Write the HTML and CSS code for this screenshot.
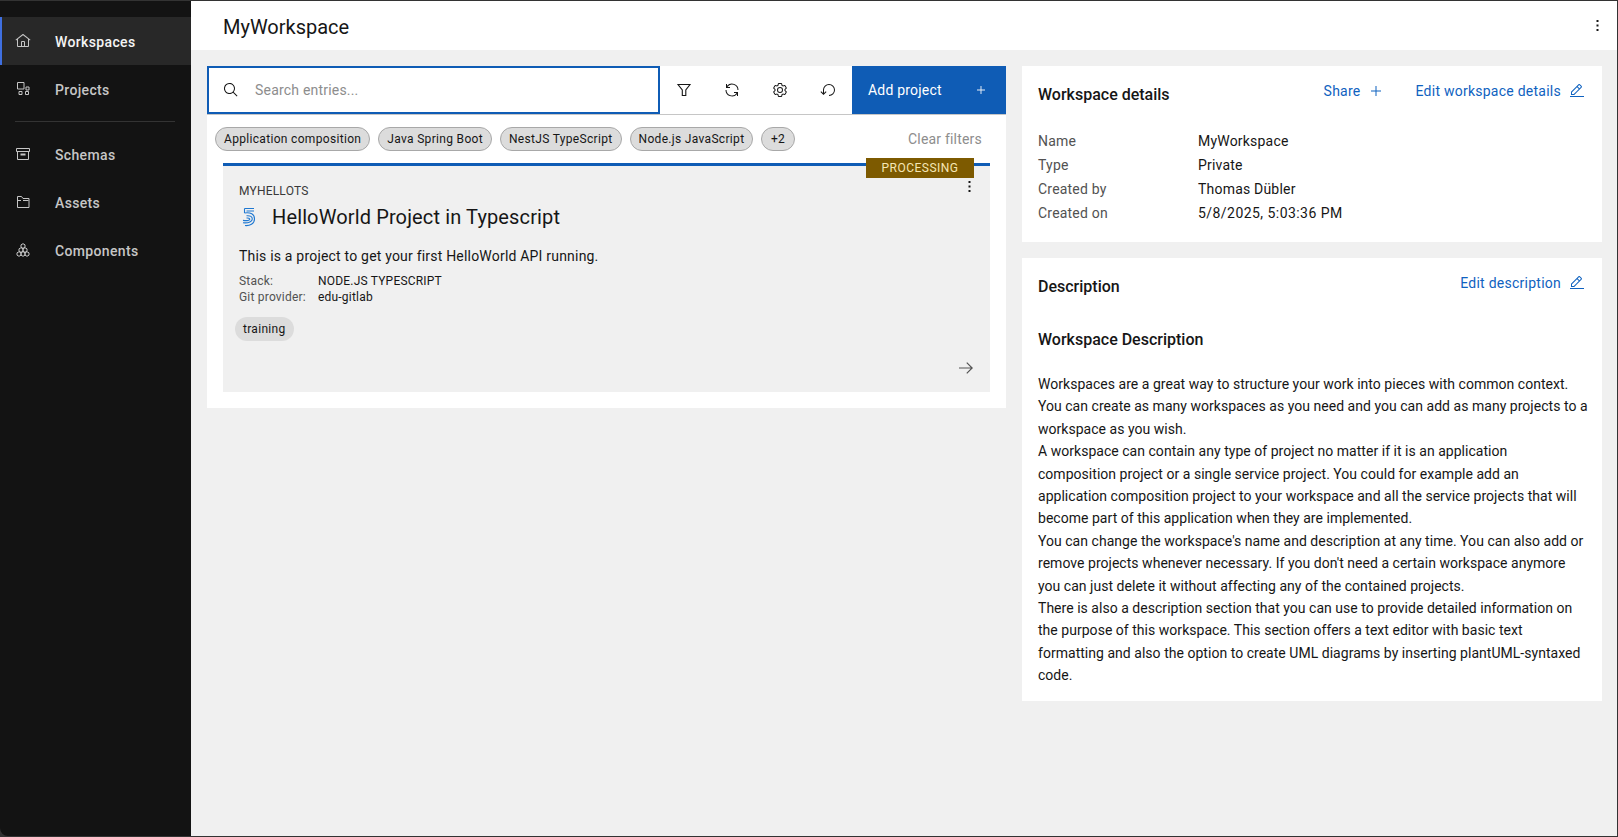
FILE: index.html
```html
<!DOCTYPE html>
<html lang="en">
<head>
<meta charset="utf-8">
<title>MyWorkspace</title>
<link rel="stylesheet" href="styles.css">
</head>
<body>
<div class="app">
  <nav class="sidebar">
    <a class="nav-item active">
      <svg class="nav-icon solid" viewBox="0 0 32 32"><path d="M16.6 2.2a1 1 0 0 0-1.2 0L1 13.4l1.2 1.6L4 13.6V26a2 2 0 0 0 2 2h20a2 2 0 0 0 2-2V13.6L29.800 15 31 13.400ZM18 26h-4v-8h4Zm2 0v-8a2 2 0 0 0-2-2h-4a2 2 0 0 0-2 2v8H6V12.100l10-7.800 10 7.800V26Z"/></svg>
      <span class="nav-label">Workspaces</span>
    </a>
    <a class="nav-item">
      <svg class="nav-icon" viewBox="0 0 16 16"><path d="M2.500 1.500h6.500v6.500H2.500zM11 6h3v3h-3zM4 10.500h3v3H4zM10.500 10.500h3v3h-3z"/></svg>
      <span class="nav-label">Projects</span>
    </a>
    <div class="nav-divider"></div>
    <a class="nav-item">
      <svg class="nav-icon" viewBox="0 0 16 16"><path d="M1.500 2.500h13v3h-13zM2.500 5.500v8h11v-8"/><path class="fill" d="M5.500 7.500h5v2h-5z"/></svg>
      <span class="nav-label">Schemas</span>
    </a>
    <a class="nav-item">
      <svg class="nav-icon" viewBox="0 0 16 16"><path d="M2.500 2.500h4l1.500 2h6v9h-11.500zM8 6.500h5.500M2.500 6.500h3.500"/></svg>
      <span class="nav-label">Assets</span>
    </a>
    <a class="nav-item">
      <svg class="nav-icon" viewBox="0 0 16 16"><path d="M8 1.700l2 1.150v2.300l-2 1.150-2-1.150v-2.300zM6 5.700l2 1.150v2.300l-2 1.150-2-1.150v-2.300zM10 5.700l2 1.150v2.300l-2 1.150-2-1.150v-2.300zM4 9.700l2 1.150v2.300l-2 1.150-2-1.150v-2.300zM8 9.700l2 1.150v2.300l-2 1.150-2-1.150v-2.300zM12 9.700l2 1.150v2.300l-2 1.150-2-1.150v-2.300z"/></svg>
      <span class="nav-label">Components</span>
    </a>
  </nav>
  <div class="main">
    <header class="topbar">
      <h1 class="page-title">MyWorkspace</h1>
      <svg class="kebab" viewBox="0 0 3 11"><path d="M.5 0h2v2h-2zM.5 4.500h2v2h-2zM.5 9h2v2h-2z"/></svg>
    </header>
    <div class="content">
      <section class="left-panel">
        <div class="toolbar">
          <div class="search">
            <svg class="tool-icon" viewBox="0 0 32 32"><path d="M29 27.600l-7.600-7.600a11 11 0 1 0-1.400 1.400L27.600 29ZM4 13a9 9 0 1 1 9 9 9 9 0 0 1-9-9Z"/></svg>
            <span class="placeholder">Search entries...</span>
          </div>
          <div class="tools">
            <button class="tool"><svg class="tool-icon outline" viewBox="0 0 16 16"><path d="M2 2.500h12L9.800 8v5.500H6.300V8z"/></svg></button>
            <button class="tool"><svg class="tool-icon" viewBox="0 0 32 32"><path d="M12 10H6.780A11 11 0 0 1 27 16h2A13 13 0 0 0 6 7.680V4H4v8h8zM20 22h5.220A11 11 0 0 1 5 16H3a13 13 0 0 0 23 8.320V28h2v-8h-8z"/></svg></button>
            <button class="tool"><svg class="tool-icon" viewBox="0 0 32 32"><path d="M27 16.760c0-.25 0-.5 0-.76s0-.51 0-.77l1.920-1.680A2 2 0 0 0 29.300 11L26.940 7a2 2 0 0 0-1.730-1 2 2 0 0 0-.64.1l-2.430.82a11.350 11.350 0 0 0-1.310-.75l-.51-2.520a2 2 0 0 0-2-1.610H13.640a2 2 0 0 0-2 1.610l-.51 2.520a11.480 11.480 0 0 0-1.320.75L7.430 6.060A2 2 0 0 0 6.790 6 2 2 0 0 0 5.060 7L2.700 11a2 2 0 0 0 .41 2.510L5 15.240c0 .25 0 .5 0 .76s0 .51 0 .77l-1.890 1.680A2 2 0 0 0 2.700 21L5.060 25a2 2 0 0 0 1.730 1 2 2 0 0 0 .64-.1l2.430-.82a11.350 11.350 0 0 0 1.310.75l.51 2.520a2 2 0 0 0 2 1.610h4.720a2 2 0 0 0 2-1.610l.51-2.520a11.480 11.480 0 0 0 1.320-.75l2.420.82a2 2 0 0 0 .64.1 2 2 0 0 0 1.730-1L29.300 21a2 2 0 0 0-.41-2.510ZM25.210 24l-3.430-1.160a8.860 8.860 0 0 1-2.710 1.570L18.360 28H13.640l-.71-3.550a9.360 9.360 0 0 1-2.700-1.570L6.790 24 4.430 20l2.720-2.400a8.900 8.900 0 0 1 0-3.130L4.430 12 6.790 8l3.430 1.160a8.860 8.860 0 0 1 2.710-1.570L13.640 4h4.720l.71 3.550a9.360 9.360 0 0 1 2.700 1.570L25.210 8 27.570 12l-2.720 2.400a8.900 8.900 0 0 1 0 3.130L27.570 20ZM16 22a6 6 0 1 1 6-6 5.940 5.940 0 0 1-6 6Zm0-10a3.910 3.910 0 0 0-4 4 3.910 3.910 0 0 0 4 4 3.910 3.910 0 0 0 4-4 3.910 3.910 0 0 0-4-4Z"/></svg></button>
            <button class="tool"><svg class="tool-icon" viewBox="0 0 32 32"><path d="M18 28A12 12 0 1 0 6 16v6.200l-3.600-3.600L1 20l6 6 6-6-1.400-1.400L8 22.200V16a10 10 0 1 1 10 10Z"/></svg></button>
          </div>
          <button class="add-btn"><span>Add project</span><svg class="plus" viewBox="0 0 10 10"><path d="M4.400 0h1.200v4.400H10v1.200H5.600V10H4.400V5.600H0V4.400h4.400z"/></svg></button>
        </div>
        <div class="filters">
          <span class="chip">Application composition</span>
          <span class="chip">Java Spring Boot</span>
          <span class="chip">NestJS TypeScript</span>
          <span class="chip">Node.js JavaScript</span>
          <span class="chip chip-more">+2</span>
          <span class="clear">Clear filters</span>
        </div>
        <article class="project">
          <span class="badge">PROCESSING</span>
          <svg class="kebab card-kebab" viewBox="0 0 3 11"><path d="M.5 0h2v2h-2zM.5 4.500h2v2h-2zM.5 9h2v2h-2z"/></svg>
          <div class="project-key">MYHELLOTS</div>
          <div class="project-head">
            <svg class="logo" viewBox="0 0 16 20"><path d="M3.500 1.500h9.500M3.500 1.500v4.500M5.500 4h7.500M3.500 6c6-.8 10 1 10 6s-5 7-9.500 6.500"/><path d="M5.500 8.800c4-.5 5.800 1 5.800 3.300S8 16.300 2 15.800M5.500 11c2-.2 3.300.3 3.300 1.300S6.500 14 2 13.400"/></svg>
            <h2 class="project-title">HelloWorld Project in Typescript</h2>
          </div>
          <p class="project-desc">This is a project to get your first HelloWorld API running.</p>
          <dl class="project-meta">
            <dt>Stack:</dt><dd>NODE.JS TYPESCRIPT</dd>
            <dt>Git provider:</dt><dd>edu-gitlab</dd>
          </dl>
          <span class="tag">training</span>
          <svg class="arrow" viewBox="4 6 24 20"><path d="M18 6l-1.430 1.390L24.150 15H4v2h20.150l-7.580 7.570L18 26l10-10z"/></svg>
        </article>
      </section>
      <div class="right-col">
        <section class="card card-details">
          <div class="card-head">
            <h3 class="card-title">Workspace details</h3>
            <div class="card-actions">
              <a class="link">Share<svg class="link-plus" viewBox="0 0 10 10"><path d="M4.500 0h1v4.500H10v1H5.500V10h-1V5.500H0v-1h4.500z"/></svg></a>
              <a class="link">Edit workspace details<svg class="pencil" viewBox="0 0 32 32"><path d="M2 26h28v2H2zM25.400 9c.8-.8.8-2 0-2.800l-3.600-3.600c-.8-.8-2-.8-2.800 0l-15 15V24h6.400l15-15zm-5-5L24 7.600l-3 3L17.400 7l3-3zM6 22v-3.600l10-10 3.600 3.600-10 10H6z"/></svg></a>
            </div>
          </div>
          <dl class="details">
            <dt>Name</dt><dd>MyWorkspace</dd>
            <dt>Type</dt><dd>Private</dd>
            <dt>Created by</dt><dd>Thomas Dübler</dd>
            <dt>Created on</dt><dd class="date">5/8/2025, 5:03:36 PM</dd>
          </dl>
        </section>
        <section class="card card-desc">
          <div class="card-head">
            <h3 class="card-title">Description</h3>
            <div class="card-actions">
              <a class="link">Edit description<svg class="pencil" viewBox="0 0 32 32"><path d="M2 26h28v2H2zM25.400 9c.8-.8.8-2 0-2.800l-3.600-3.600c-.8-.8-2-.8-2.800 0l-15 15V24h6.400l15-15zm-5-5L24 7.600l-3 3L17.400 7l3-3zM6 22v-3.600l10-10 3.600 3.600-10 10H6z"/></svg></a>
            </div>
          </div>
          <h4 class="desc-title">Workspace Description</h4>
          <div class="desc-body">
            <p>Workspaces are a great way to structure your work into pieces with common context.<br>You can create as many workspaces as you need and you can add as many projects to a<br>workspace as you wish.</p>
            <p>A workspace can contain any type of project no matter if it is an application<br>composition project or a single service project. You could for example add an<br>application composition project to your workspace and all the service projects that will<br>become part of this application when they are implemented.</p>
            <p>You can change the workspace's name and description at any time. You can also add or<br>remove projects whenever necessary. If you don't need a certain workspace anymore<br>you can just delete it without affecting any of the contained projects.</p>
            <p>There is also a description section that you can use to provide detailed information on<br>the purpose of this workspace. This section offers a text editor with basic text<br>formatting and also the option to create UML diagrams by inserting plantUML-syntaxed<br>code.</p>
          </div>
        </section>
      </div>
    </div>
  </div>
</div>
</body>
</html>
```
FILE: styles.css
```css
* { box-sizing: border-box; }
html, body { height: 100%; }
body {
  margin: 0;
  background: #3a3a3a;
  font-family: Roboto, "Noto Sans", sans-serif;
  font-size: 14px;
  color: #161616;
  overflow: hidden;
}
.app {
  display: flex;
  height: 837px;
  width: 1618px;
  padding: 1px 1px 1px 0;
  background: #333;
}
.sidebar {
  width: 191px;
  flex: none;
  background: #131313;
  padding-top: 16px;
  border-bottom-left-radius: 8px;
}
.nav-item {
  display: flex;
  align-items: center;
  height: 48px;
  padding-left: 13px;
  color: #c6c6c6;
  font-size: 14px;
  font-weight: 500;
  letter-spacing: .35px;
  border-left: 2px solid transparent;
}
.nav-item.active {
  background: #282828;
  color: #f4f4f4;
  border-left-color: #3f6fe0;
}
.nav-label { padding-top: 2px; }
.nav-icon {
  width: 16px;
  height: 16px;
  margin-right: 24px;
  fill: none;
  stroke: #c6c6c6;
  stroke-width: 1;
  flex: none;
}
.nav-icon.solid { fill: #c6c6c6; stroke: none; }
.nav-icon .fill { fill: #c6c6c6; stroke: none; }
.nav-divider {
  height: 1px;
  margin: 8px 16px 8px 15px;
  background: #333;
}
.main {
  flex: 1;
  display: flex;
  flex-direction: column;
  background: #f0f0f0;
  min-width: 0;
}
.topbar {
  height: 49px;
  background: #fff;
  flex: none;
  display: flex;
  align-items: center;
  justify-content: space-between;
  padding: 0 18px 0 32px;
}
.page-title {
  margin: 0;
  padding-top: 2px;
  font-size: 20px;
  font-weight: 400;
  color: #161616;
}
.kebab { width: 3px; height: 11px; fill: #161616; }
.content {
  display: flex;
  gap: 16px;
  padding: 16px 15px 0 16px;
  align-items: flex-start;
}
.left-panel {
  width: 799px;
  flex: none;
  background: #fff;
  padding-bottom: 16px;
}
.toolbar {
  display: flex;
  height: 49px;
  border-bottom: 1px solid #c6c6c6;
}
.search {
  width: 453px;
  border: 2px solid #0f5cb5;
  display: flex;
  align-items: center;
  padding-left: 14px;
}
.placeholder { color: #8d8d8d; margin-left: 16px; font-size: 14px; letter-spacing: .2px; }
.tools { display: flex; flex: 1; }
.tool {
  width: 48px;
  background: none;
  border: 0;
  padding: 0;
  display: flex;
  align-items: center;
  justify-content: center;
}
.tool-icon { width: 16px; height: 16px; fill: #161616; flex: none; }
.tool-icon.outline { fill: none; stroke: #161616; stroke-width: 1.1; }
.add-btn {
  width: 154px;
  flex: none;
  background: #0f5cb5;
  color: #fff;
  border: 0;
  padding: 0 21px 0 16px;
  display: flex;
  align-items: center;
  justify-content: space-between;
  font: inherit;
  letter-spacing: .2px;
}
.plus { width: 8px; height: 8px; fill: #e8eef7; }
.filters {
  display: flex;
  align-items: center;
  gap: 8px;
  padding: 0 24px 0 8px;
  height: 48px;
}
.chip {
  height: 24px;
  line-height: 22px;
  padding: 0 8px;
  border: 1px solid #a8a8a8;
  border-radius: 12px;
  background: #dcdcdc;
  font-size: 12px;
  letter-spacing: .32px;
  white-space: nowrap;
}
.chip-more { padding: 0 8.5px; }
.clear { margin-left: auto; color: #8d8d8d; font-size: 14px; letter-spacing: .2px; }
.project {
  position: relative;
  margin: 0 16px;
  height: 229px;
  background: #f0f0f0;
  border-top: 3px solid #0f5cb5;
  padding: 18px 16px 0;
}
.badge {
  position: absolute;
  top: -8px;
  right: 16px;
  width: 108px;
  height: 20px;
  line-height: 20px;
  text-align: center;
  background: #7d5a00;
  color: #f5e6b5;
  font-size: 12px;
  letter-spacing: .5px;
}
.card-kebab { position: absolute; top: 15px; right: 19px; }
.project-key { font-size: 12px; color: #393939; letter-spacing: .2px; }
.project-head { display: flex; align-items: center; gap: 15px; margin-top: 7px; }
.logo { width: 16px; height: 20px; fill: none; stroke: #1f78d1; stroke-width: 1.1; flex: none; margin-left: 2px; }
.project-title { margin: 0; font-size: 20px; font-weight: 400; letter-spacing: .13px; }
.project-desc { margin: 18px 0 0; font-size: 14px; letter-spacing: .2px; line-height: 18px; }
.project-meta {
  display: grid;
  grid-template-columns: 79px 1fr;
  margin: 8px 0 0;
  font-size: 12px;
  line-height: 16px;
  letter-spacing: .2px;
}
.project-meta dt { color: #525252; }
.project-meta dd { margin: 0; }
.tag {
  display: inline-block;
  margin: 12px 0 0 -4px;
  height: 24px;
  line-height: 24px;
  padding: 0 8px;
  border-radius: 12px;
  background: #dcdcdc;
  font-size: 12px;
  letter-spacing: .3px;
}
.arrow {
  position: absolute;
  right: 17px;
  bottom: 18px;
  width: 14px;
  height: 12px;
  fill: #525252;
}
.right-col {
  flex: 1;
  min-width: 0;
  display: flex;
  flex-direction: column;
  gap: 16px;
}
.card { background: #fff; padding: 16px; }
.card-details { padding-bottom: 17px; }
.card-desc { padding-bottom: 14px; }
.card-head {
  display: flex;
  justify-content: space-between;
  align-items: flex-start;
  padding-right: 1px;
}
.card-title { margin: 2px 0 0; font-size: 16px; font-weight: 500; line-height: 22px; }
.card-actions { display: flex; gap: 35px; margin-top: -1px; }
.link {
  display: flex;
  align-items: center;
  color: #0f62c0;
  font-size: 14px;
  letter-spacing: .25px;
  line-height: 20px;
}
.link-plus { width: 10px; height: 10px; margin-left: 10px; fill: #0f62c0; }
.pencil { width: 16px; height: 16px; margin-left: 8px; fill: #0f62c0; }
.details {
  display: grid;
  grid-template-columns: 160px 1fr;
  margin: 23px 0 0;
  font-size: 14px;
  line-height: 24px;
  letter-spacing: .2px;
}
.details dt { color: #525252; }
.details dd { margin: 0; }
.details .date { letter-spacing: .45px; }
.desc-title { margin: 31px 0 0; font-size: 16px; font-weight: 500; line-height: 22px; }
.desc-body { margin-top: 22px; font-size: 14px; line-height: 22.4px; letter-spacing: .03px; }
.desc-body p { margin: 0; white-space: nowrap; }
```
